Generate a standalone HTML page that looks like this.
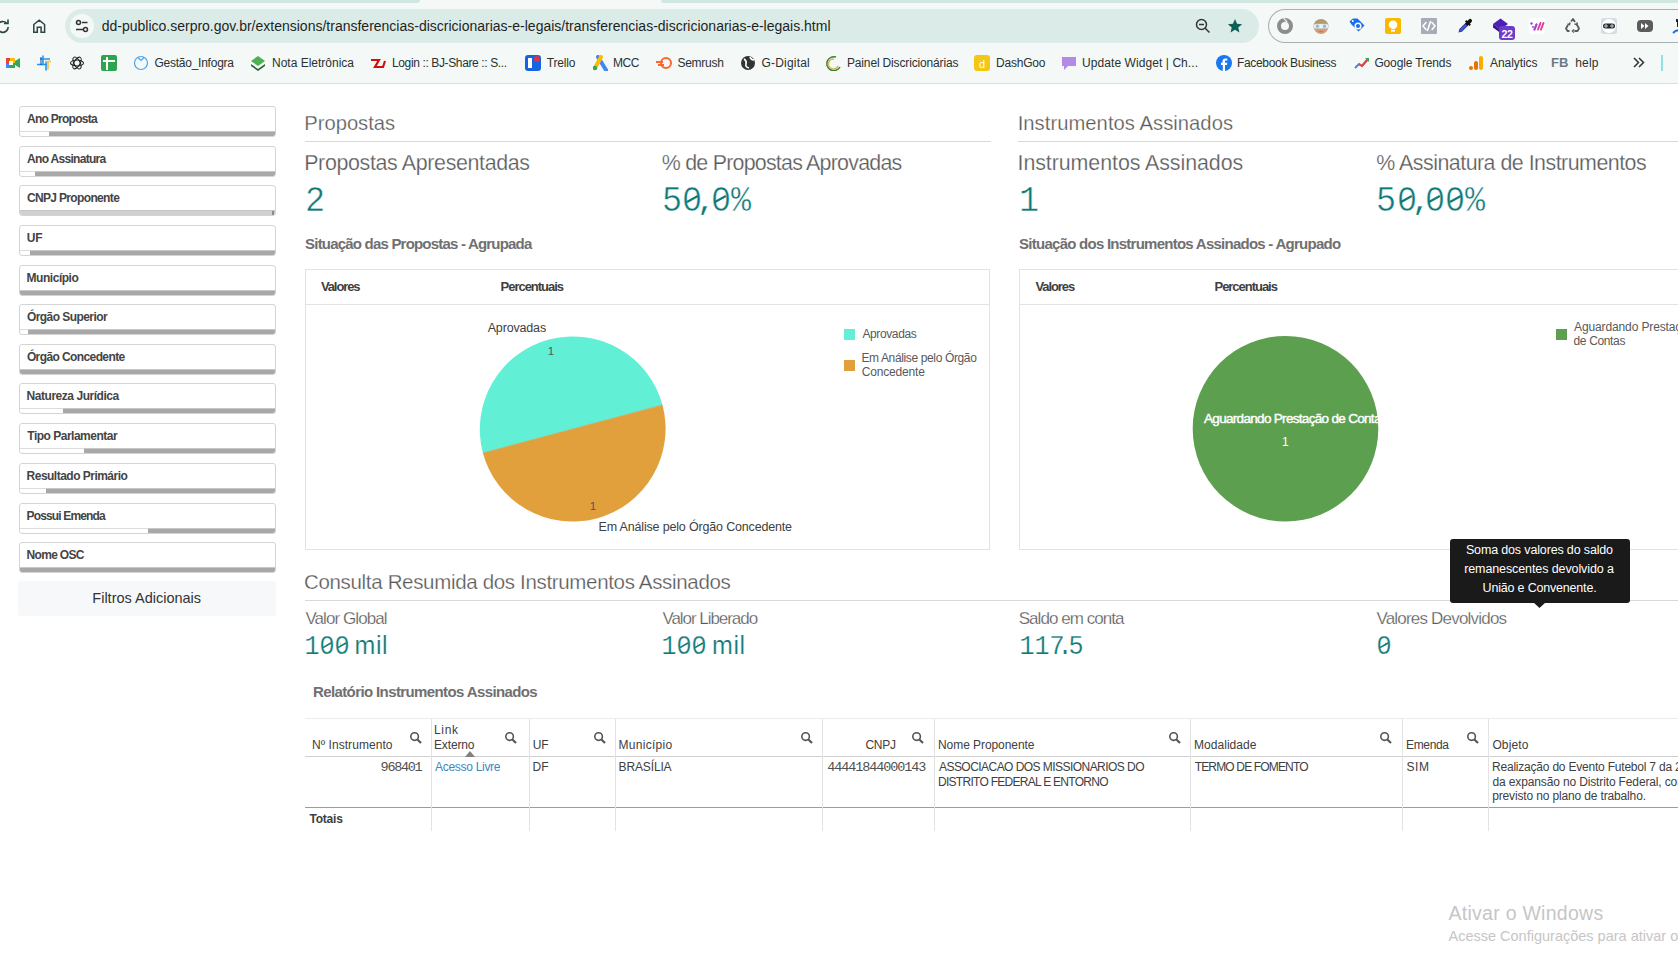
<!DOCTYPE html><html><head><meta charset="utf-8"><style>
html,body{margin:0;padding:0;width:1678px;height:960px;overflow:hidden;background:#fff;}
body{position:relative;font-family:"Liberation Sans",sans-serif;}
.t{position:absolute;white-space:nowrap;line-height:1;}
</style></head><body>
<div style="position:absolute;left:0px;top:0px;width:1678px;height:84px;background:#f4f9f8;"></div>
<div style="position:absolute;left:0px;top:0px;width:420px;height:3px;background:#cfe6e1;border-bottom-right-radius:3px;"></div>
<div style="position:absolute;left:661px;top:0px;width:1017px;height:3px;background:#cfe6e1;border-bottom-left-radius:3px;"></div>
<div style="position:absolute;left:0px;top:83px;width:1678px;height:1px;background:#d9dfde;"></div>
<div style="position:absolute;left:65px;top:9px;width:1194px;height:34px;background:#dbece8;border-radius:17px;"></div>
<div style="position:absolute;left:70px;top:14px;width:24px;height:24px;background:#f4f9f8;border-radius:12px;"></div>
<svg style="position:absolute;left:75px;top:19px" width="14" height="14" viewBox="0 0 14 14" fill="none" stroke="#333" stroke-width="1.5"><circle cx="3.5" cy="3.5" r="2"/><line x1="7" y1="3.5" x2="12.5" y2="3.5"/><circle cx="10.5" cy="10.5" r="2"/><line x1="1" y1="10.5" x2="8" y2="10.5"/></svg>
<div class="t" style="left:101.70px;top:18.75px;font-size:14px;color:#1f1f1f;">dd-publico.serpro.gov.br/extensions/transferencias-discricionarias-e-legais/transferencias-discricionarias-e-legais.html</div>
<svg style="position:absolute;left:-5px;top:19px" width="16" height="16" viewBox="0 0 16 16" fill="none" stroke="#2b4541" stroke-width="1.6"><path d="M13.2 8a5.4 5.4 0 1 1-1.6-3.9"/><path d="M13 0.5v4h-4"/></svg>
<svg style="position:absolute;left:32px;top:18px" width="15" height="16" viewBox="0 0 15 16" fill="none" stroke="#2b4541" stroke-width="1.5" stroke-linejoin="miter"><path d="M1.8 6.5L7.2 2.2L12.6 6.5V14.2H9.1V9.3H5.3V14.2H1.8Z"/></svg>
<svg style="position:absolute;left:1195px;top:18px" width="16" height="16" viewBox="0 0 16 16" fill="none" stroke="#333" stroke-width="1.5"><circle cx="6.5" cy="6.5" r="5"/><line x1="4" y1="6.5" x2="9" y2="6.5"/><line x1="10" y1="10" x2="14.5" y2="14.5"/></svg>
<svg style="position:absolute;left:1227px;top:18px" width="16" height="16" viewBox="0 0 24 24"><path fill="#0b6058" d="M12 1.5l3.1 7.2 7.6.6-5.8 5 1.8 7.5L12 17.8l-6.7 4 1.8-7.5-5.8-5 7.6-.6z"/></svg>
<div style="position:absolute;left:1268px;top:9px;width:440px;height:32px;border:1px solid #a9b0af;border-right:none;border-radius:17px 0 0 17px;"></div>
<svg style="position:absolute;left:1277px;top:18px;overflow:visible" width="16" height="16" viewBox="0 0 16 16"><circle cx="8" cy="8" r="6" fill="none" stroke="#8c8c8c" stroke-width="4"/><path d="M6.5 0.5l3 3-2 1.5" fill="#f4f9f8" stroke="#f4f9f8" stroke-width="1.5"/><path d="M6 1.5l2.5 2.2" stroke="#8c8c8c" stroke-width="1.2"/></svg>
<svg style="position:absolute;left:1313px;top:18px;overflow:visible" width="16" height="16" viewBox="0 0 16 16"><circle cx="8" cy="8.5" r="7.5" fill="#d69c78"/><path d="M0.8 7A7.5 7.5 0 0 1 15.2 7z" fill="#b59a70"/><rect x="0.5" y="6" width="15" height="4.6" rx="2.3" fill="#eef6f8" stroke="#c0c8cc" stroke-width=".5"/><circle cx="4.5" cy="8.3" r="1.8" fill="#8fbfd0"/><circle cx="11.5" cy="8.3" r="1.8" fill="#8fbfd0"/><path d="M5 13l3 1.5 3-1.5" fill="#c07a5a"/></svg>
<svg style="position:absolute;left:1349px;top:18px;overflow:visible" width="16" height="16" viewBox="0 0 16 16"><path d="M0.5 3.5L4 0.5h4.5l7 7-6 6-7-7z" fill="#1a6ee8" transform="rotate(0)"/><circle cx="9" cy="8" r="2.8" fill="none" stroke="#fff" stroke-width="1.5"/><circle cx="3.8" cy="3" r="1" fill="#fff"/></svg>
<svg style="position:absolute;left:1385px;top:18px;overflow:visible" width="16" height="16" viewBox="0 0 16 16"><rect x="0" y="0" width="16" height="16" rx="2" fill="#fbb800"/><circle cx="8" cy="6.8" r="4.3" fill="#fff"/><rect x="6" y="11.8" width="4" height="1.8" fill="#fff"/></svg>
<svg style="position:absolute;left:1421px;top:18px;overflow:visible" width="16" height="16" viewBox="0 0 16 16"><rect x="0" y="0" width="16" height="16" rx="1" fill="#a8abb8"/><path d="M5 4.5L2 8l3 3.5M11 4.5L14 8l-3 3.5M9.5 3.5L6.5 12.5" stroke="#fff" stroke-width="1.6" fill="none" stroke-linecap="round"/></svg>
<svg style="position:absolute;left:1457px;top:18px;overflow:visible" width="16" height="16" viewBox="0 0 16 16"><path d="M14.5 1.5a1.8 1.8 0 0 0-2.6 0l-1.6 1.6-1-1-1.3 1.3 1 1-6.5 6.5-1 3.6 3.6-1 6.5-6.5 1 1 1.3-1.3-1-1 1.6-1.6a1.8 1.8 0 0 0 0-2.6z" fill="#111"/><path d="M2.6 11.2l5.5-5.5 2.2 2.2-5.5 5.5-2.8.6z" fill="#3d55d6"/></svg>
<svg style="position:absolute;left:1493px;top:18px;overflow:visible" width="16" height="16" viewBox="0 0 16 16"><path d="M0 6L7.5 0.5 15 6 7.5 11.5z" fill="#4b1fb8"/><path d="M0 6v3.5l7.5 5.5V11.5z" fill="#3a1590"/><rect x="6" y="8" width="16" height="14" rx="3" fill="#6f3bc8"/><text x="14" y="19.6" font-size="10.5" font-weight="700" text-anchor="middle" fill="#fff" font-family="Liberation Sans" letter-spacing="-0.3">22</text></svg>
<svg style="position:absolute;left:1529px;top:18px;overflow:visible" width="16" height="16" viewBox="0 0 16 16"><rect width="16" height="16" rx="2.5" fill="#fff"/><path d="M5.5 11.5l2-5M9 11.5l2.5-6.5M12 11.5l2.5-6.5" stroke="#e63c9a" stroke-width="2" stroke-linecap="round"/><path d="M5.5 11.5l2-5" stroke="#9b45f0" stroke-width="2" stroke-linecap="round"/><circle cx="2.5" cy="5.5" r="1.2" fill="#7b4cf2"/><circle cx="4" cy="9" r="1" fill="#a04cf2"/></svg>
<svg style="position:absolute;left:1565px;top:18px;overflow:visible" width="16" height="16" viewBox="0 0 16 16"><path d="M6 3.5l2-2.5 2 3M11.5 6l2.5 4.5-1.5 2.5H9.5M4.5 13H2.5L1 10.5l2-3.5" stroke="#5a5a5a" stroke-width="1.8" fill="none" stroke-linejoin="round"/><path d="M9 11.5l-1.5 1.5 1.5 1.5M12.5 4.5l-1 2-2-.5M2.5 6l2 .5.5-2" stroke="#5a5a5a" stroke-width="1.5" fill="none"/></svg>
<svg style="position:absolute;left:1601px;top:18px;overflow:visible" width="16" height="16" viewBox="0 0 16 16"><rect width="16" height="16" rx="2.5" fill="#d5dde3"/><circle cx="8" cy="8" r="7" fill="#fff"/><rect x="2" y="5.5" width="12" height="5" rx="2.5" fill="#1f2a33"/><circle cx="5" cy="8" r="1.2" fill="none" stroke="#fff" stroke-width=".8"/><circle cx="11" cy="8" r="1.2" fill="none" stroke="#fff" stroke-width=".8"/></svg>
<svg style="position:absolute;left:1637px;top:18px;overflow:visible" width="16" height="16" viewBox="0 0 16 16"><rect x="0" y="2" width="16" height="12" rx="4" fill="#5c5c5c"/><path d="M4 5l3.5 3L4 11zM8 5l3.5 3L8 11z" fill="#fff"/></svg>
<svg style="position:absolute;left:1673px;top:18px;overflow:visible" width="16" height="16" viewBox="0 0 16 16"><path d="M3 1h6v3H3z M4 4h4v5H4z" fill="#222"/><path d="M0 15q4-4 8-2" stroke="#1a73e8" stroke-width="2" fill="none"/></svg>
<svg style="position:absolute;left:5px;top:55px" width="16" height="16" viewBox="0 0 16 16"><rect x="1" y="3" width="9" height="10" rx="1" fill="#fbbc04"/><rect x="1" y="8" width="9" height="5" fill="#34a853"/><rect x="1" y="3" width="4" height="6" fill="#ea4335"/><rect x="1" y="9" width="3" height="4" fill="#4285f4"/><path d="M10 6l5-3v10l-5-3z" fill="#34a853"/><rect x="4" y="6" width="4" height="4" fill="#fff"/></svg>
<svg style="position:absolute;left:37px;top:55px" width="16" height="16" viewBox="0 0 16 16"><path d="M6 0.5v10M3 4h10M0 9.5h10M9 6v9.5" stroke="#2196f3" stroke-width="1.6" fill="none"/><path d="M8 6.5h6M11 6.5v8" stroke="#fbc02d" stroke-width="1.6"/><path d="M4 2v8" stroke="#0d47a1" stroke-width="1"/></svg>
<svg style="position:absolute;left:69px;top:55px" width="16" height="16" viewBox="0 0 16 16"><g fill="none" stroke="#222" stroke-width="1.1"><ellipse cx="8" cy="8" rx="6.5" ry="3"/><ellipse cx="8" cy="8" rx="6.5" ry="3" transform="rotate(60 8 8)"/><ellipse cx="8" cy="8" rx="6.5" ry="3" transform="rotate(120 8 8)"/></g></svg>
<svg style="position:absolute;left:101px;top:55px" width="16" height="16" viewBox="0 0 16 16"><rect width="16" height="16" rx="2" fill="#2ea44f"/><path d="M2 6h12M6 2v13" stroke="#fff" stroke-width="2"/></svg>
<svg style="position:absolute;left:133px;top:55px" width="16" height="16" viewBox="0 0 16 16"><circle cx="8" cy="8" r="6.5" fill="none" stroke="#4ba3ef" stroke-width="1.2"/><path d="M5 2.5l3 3 3-3" fill="none" stroke="#4ba3ef" stroke-width="1.2"/></svg>
<svg style="position:absolute;left:250px;top:55px" width="16" height="16" viewBox="0 0 16 16"><path d="M8 1l7 5-7 5-7-5z" fill="#4caf50"/><path d="M1 9l7 5 7-5v2l-7 5-7-5z" fill="#2e5e32"/></svg>
<svg style="position:absolute;left:370px;top:55px" width="16" height="16" viewBox="0 0 16 16"><path d="M1 5h8l-4 7h8l2-6" stroke="#d01010" stroke-width="2.2" fill="none"/></svg>
<svg style="position:absolute;left:525px;top:55px" width="16" height="16" viewBox="0 0 16 16"><rect width="16" height="16" rx="3" fill="#1565e0"/><rect x="3" y="3" width="4" height="10" fill="#fff"/><circle cx="12" cy="4" r="3" fill="#e0304a"/></svg>
<svg style="position:absolute;left:592px;top:55px" width="16" height="16" viewBox="0 0 16 16"><path d="M6 2l8 13" stroke="#4285f4" stroke-width="4" stroke-linecap="round"/><path d="M9 2L3 13" stroke="#fbbc04" stroke-width="4" stroke-linecap="round"/><circle cx="3" cy="13" r="2.2" fill="#34a853"/></svg>
<svg style="position:absolute;left:656px;top:55px" width="16" height="16" viewBox="0 0 16 16"><circle cx="10" cy="8" r="5" fill="none" stroke="#ff642d" stroke-width="2"/><path d="M0 7h7M2 10h6" stroke="#ff642d" stroke-width="2"/></svg>
<svg style="position:absolute;left:740px;top:55px" width="16" height="16" viewBox="0 0 16 16"><circle cx="8" cy="8" r="7" fill="#333"/><path d="M4 4q3 2 2 5t3 4M10 2q1 3 4 3" stroke="#fff" stroke-width="1.6" fill="none"/></svg>
<svg style="position:absolute;left:825px;top:55px" width="16" height="16" viewBox="0 0 16 16"><path d="M11 2a7 7 0 1 0 4 10" stroke="#3b7d3b" stroke-width="1.5" fill="none"/><path d="M9 4a5 5 0 1 0 4 7" stroke="#d4b84a" stroke-width="1.5" fill="none"/></svg>
<svg style="position:absolute;left:974px;top:55px" width="16" height="16" viewBox="0 0 16 16"><rect width="16" height="16" rx="3" fill="#f5c518"/><text x="8" y="13" font-size="11" text-anchor="middle" fill="#fff" font-family="Liberation Sans">d</text></svg>
<svg style="position:absolute;left:1061px;top:55px" width="16" height="16" viewBox="0 0 16 16"><path d="M1 2h14v9H7l-4 4v-4H1z" fill="#b38ae6"/></svg>
<svg style="position:absolute;left:1216px;top:55px" width="16" height="16" viewBox="0 0 16 16"><circle cx="8" cy="8" r="8" fill="#1877f2"/><path d="M9 16V10h2l.3-2.2H9V6.5c0-.6.2-1 1-1h1.3V3.5c-.3 0-1-.1-1.8-.1-1.8 0-3 1.1-3 3.1v1.3H5V10h1.8v6z" fill="#fff"/></svg>
<svg style="position:absolute;left:1354px;top:55px" width="16" height="16" viewBox="0 0 16 16"><path d="M1 13l4-4 3 2 6-7" stroke="#4285f4" stroke-width="2" fill="none"/><path d="M5 9l3 2 6-7" stroke="#ea4335" stroke-width="2" fill="none"/><path d="M11 3h4v4" fill="#34a853"/></svg>
<svg style="position:absolute;left:1468px;top:55px" width="16" height="16" viewBox="0 0 16 16"><rect x="11" y="1" width="4" height="14" rx="2" fill="#f9ab00"/><rect x="6" y="6" width="4" height="9" rx="2" fill="#e37400"/><circle cx="3" cy="13" r="2" fill="#e37400"/></svg>
<div class="t" style="left:154.40px;top:56.64px;font-size:12px;color:#2b3130;letter-spacing:-0.238px;">Gestão_Infogra</div>
<div class="t" style="left:272.00px;top:56.64px;font-size:12px;color:#2b3130;">Nota Eletrônica</div>
<div class="t" style="left:392.00px;top:56.64px;font-size:12px;color:#2b3130;letter-spacing:-0.375px;">Login :: BJ-Share :: S...</div>
<div class="t" style="left:546.70px;top:56.64px;font-size:12px;color:#2b3130;letter-spacing:-0.160px;">Trello</div>
<div class="t" style="left:613.00px;top:56.64px;font-size:12px;color:#2b3130;letter-spacing:-0.450px;">MCC</div>
<div class="t" style="left:677.50px;top:56.64px;font-size:12px;color:#2b3130;letter-spacing:-0.283px;">Semrush</div>
<div class="t" style="left:761.40px;top:56.64px;font-size:12px;color:#2b3130;letter-spacing:0.213px;">G-Digital</div>
<div class="t" style="left:847.00px;top:56.64px;font-size:12px;color:#2b3130;letter-spacing:-0.157px;">Painel Discricionárias</div>
<div class="t" style="left:996.00px;top:56.64px;font-size:12px;color:#2b3130;letter-spacing:-0.200px;">DashGoo</div>
<div class="t" style="left:1082.10px;top:56.64px;font-size:12px;color:#2b3130;letter-spacing:0.070px;">Update Widget | Ch...</div>
<div class="t" style="left:1237.00px;top:56.64px;font-size:12px;color:#2b3130;letter-spacing:-0.331px;">Facebook Business</div>
<div class="t" style="left:1374.40px;top:56.64px;font-size:12px;color:#2b3130;letter-spacing:-0.142px;">Google Trends</div>
<div class="t" style="left:1490.00px;top:56.64px;font-size:12px;color:#2b3130;letter-spacing:-0.075px;">Analytics</div>
<div class="t" style="left:1551.10px;top:55.80px;font-size:13px;color:#6b7a80;font-weight:700;">FB</div>
<div class="t" style="left:1575.20px;top:56.64px;font-size:12px;color:#2b3130;letter-spacing:0.200px;">help</div>
<svg style="position:absolute;left:1632px;top:57px" width="13" height="11" viewBox="0 0 13 11" fill="none" stroke="#333" stroke-width="1.5"><path d="M2 1l4.5 4.5L2 10M7 1l4.5 4.5L7 10"/></svg>
<div style="position:absolute;left:1661px;top:55px;width:2px;height:16px;background:#8fe3df;"></div>
<div style="position:absolute;left:19px;top:106px;width:255px;height:29px;border:1px solid #d4d4d4;border-radius:3px;background:#fff;overflow:hidden;"><div style="position:absolute;left:0;bottom:0;width:255px;height:5px;border-top:1px solid #dcdcdc;box-sizing:border-box;"></div><div style="position:absolute;left:29px;bottom:0;right:0;height:5px;background:#a8a8a8;border-top:1px solid #c8c8c8;box-sizing:border-box;"></div></div>
<div class="t" style="left:27.10px;top:113.14px;font-size:12px;color:#444;font-weight:700;letter-spacing:-0.745px;">Ano Proposta</div>
<div style="position:absolute;left:19px;top:146px;width:255px;height:29px;border:1px solid #d4d4d4;border-radius:3px;background:#fff;overflow:hidden;"><div style="position:absolute;left:0;bottom:0;width:255px;height:5px;border-top:1px solid #dcdcdc;box-sizing:border-box;"></div><div style="position:absolute;left:15px;bottom:0;right:0;height:5px;background:#a8a8a8;border-top:1px solid #c8c8c8;box-sizing:border-box;"></div></div>
<div class="t" style="left:27.10px;top:153.14px;font-size:12px;color:#444;font-weight:700;letter-spacing:-0.700px;">Ano Assinatura</div>
<div style="position:absolute;left:19px;top:185px;width:255px;height:29px;border:1px solid #d4d4d4;border-radius:3px;background:#fff;overflow:hidden;"><div style="position:absolute;left:0;bottom:0;width:255px;height:5px;background:#d0d0d0;border-top:1px solid #c4c4c4;box-sizing:border-box;"></div><div style="position:absolute;right:1px;bottom:0;width:2px;height:4px;background:#8a8a8a;"></div></div>
<div class="t" style="left:26.90px;top:192.14px;font-size:12px;color:#444;font-weight:700;letter-spacing:-0.650px;">CNPJ Proponente</div>
<div style="position:absolute;left:19px;top:225px;width:255px;height:29px;border:1px solid #d4d4d4;border-radius:3px;background:#fff;overflow:hidden;"><div style="position:absolute;left:0;bottom:0;width:255px;height:5px;border-top:1px solid #dcdcdc;box-sizing:border-box;"></div><div style="position:absolute;left:10px;bottom:0;right:0;height:5px;background:#a8a8a8;border-top:1px solid #c8c8c8;box-sizing:border-box;"></div></div>
<div class="t" style="left:26.70px;top:232.14px;font-size:12px;color:#444;font-weight:700;">UF</div>
<div style="position:absolute;left:19px;top:265px;width:255px;height:29px;border:1px solid #d4d4d4;border-radius:3px;background:#fff;overflow:hidden;"><div style="position:absolute;left:0;bottom:0;width:255px;height:5px;border-top:1px solid #dcdcdc;box-sizing:border-box;"></div><div style="position:absolute;left:0px;bottom:0;right:0;height:5px;background:#a8a8a8;border-top:1px solid #c8c8c8;box-sizing:border-box;"></div></div>
<div class="t" style="left:26.60px;top:272.14px;font-size:12px;color:#444;font-weight:700;letter-spacing:-0.475px;">Município</div>
<div style="position:absolute;left:19px;top:304px;width:255px;height:29px;border:1px solid #d4d4d4;border-radius:3px;background:#fff;overflow:hidden;"><div style="position:absolute;left:0;bottom:0;width:255px;height:5px;border-top:1px solid #dcdcdc;box-sizing:border-box;"></div><div style="position:absolute;left:8px;bottom:0;right:0;height:5px;background:#a8a8a8;border-top:1px solid #c8c8c8;box-sizing:border-box;"></div></div>
<div class="t" style="left:26.90px;top:311.14px;font-size:12px;color:#444;font-weight:700;letter-spacing:-0.562px;">Órgão Superior</div>
<div style="position:absolute;left:19px;top:344px;width:255px;height:29px;border:1px solid #d4d4d4;border-radius:3px;background:#fff;overflow:hidden;"><div style="position:absolute;left:0;bottom:0;width:255px;height:5px;border-top:1px solid #dcdcdc;box-sizing:border-box;"></div><div style="position:absolute;left:0px;bottom:0;right:0;height:5px;background:#a8a8a8;border-top:1px solid #c8c8c8;box-sizing:border-box;"></div></div>
<div class="t" style="left:26.90px;top:351.14px;font-size:12px;color:#444;font-weight:700;letter-spacing:-0.600px;">Órgão Concedente</div>
<div style="position:absolute;left:19px;top:383px;width:255px;height:29px;border:1px solid #d4d4d4;border-radius:3px;background:#fff;overflow:hidden;"><div style="position:absolute;left:0;bottom:0;width:255px;height:5px;border-top:1px solid #dcdcdc;box-sizing:border-box;"></div><div style="position:absolute;left:43px;bottom:0;right:0;height:5px;background:#a8a8a8;border-top:1px solid #c8c8c8;box-sizing:border-box;"></div></div>
<div class="t" style="left:26.60px;top:390.14px;font-size:12px;color:#444;font-weight:700;letter-spacing:-0.463px;">Natureza Jurídica</div>
<div style="position:absolute;left:19px;top:423px;width:255px;height:29px;border:1px solid #d4d4d4;border-radius:3px;background:#fff;overflow:hidden;"><div style="position:absolute;left:0;bottom:0;width:255px;height:5px;border-top:1px solid #dcdcdc;box-sizing:border-box;"></div><div style="position:absolute;left:64px;bottom:0;right:0;height:5px;background:#a8a8a8;border-top:1px solid #c8c8c8;box-sizing:border-box;"></div></div>
<div class="t" style="left:27.30px;top:430.14px;font-size:12px;color:#444;font-weight:700;letter-spacing:-0.500px;">Tipo Parlamentar</div>
<div style="position:absolute;left:19px;top:463px;width:255px;height:29px;border:1px solid #d4d4d4;border-radius:3px;background:#fff;overflow:hidden;"><div style="position:absolute;left:0;bottom:0;width:255px;height:5px;border-top:1px solid #dcdcdc;box-sizing:border-box;"></div><div style="position:absolute;left:26px;bottom:0;right:0;height:5px;background:#a8a8a8;border-top:1px solid #c8c8c8;box-sizing:border-box;"></div></div>
<div class="t" style="left:26.60px;top:470.14px;font-size:12px;color:#444;font-weight:700;letter-spacing:-0.518px;">Resultado Primário</div>
<div style="position:absolute;left:19px;top:503px;width:255px;height:29px;border:1px solid #d4d4d4;border-radius:3px;background:#fff;overflow:hidden;"><div style="position:absolute;left:0;bottom:0;width:255px;height:5px;border-top:1px solid #dcdcdc;box-sizing:border-box;"></div><div style="position:absolute;left:128px;bottom:0;right:0;height:5px;background:#a8a8a8;border-top:1px solid #c8c8c8;box-sizing:border-box;"></div></div>
<div class="t" style="left:26.60px;top:510.14px;font-size:12px;color:#444;font-weight:700;letter-spacing:-0.858px;">Possui Emenda</div>
<div style="position:absolute;left:19px;top:542px;width:255px;height:29px;border:1px solid #d4d4d4;border-radius:3px;background:#fff;overflow:hidden;"><div style="position:absolute;left:0;bottom:0;width:255px;height:5px;border-top:1px solid #dcdcdc;box-sizing:border-box;"></div><div style="position:absolute;left:0px;bottom:0;right:0;height:5px;background:#a8a8a8;border-top:1px solid #c8c8c8;box-sizing:border-box;"></div></div>
<div class="t" style="left:26.60px;top:549.14px;font-size:12px;color:#444;font-weight:700;letter-spacing:-0.700px;">Nome OSC</div>
<div style="position:absolute;left:18px;top:581px;width:258px;height:35px;background:#f6f8fa;border-radius:3px;"></div>
<div class="t" style="left:92.30px;top:590.73px;font-size:14.5px;color:#333;">Filtros Adicionais</div>
<div class="t" style="left:304.30px;top:112.70px;font-size:20.2px;color:#595959;letter-spacing:-0.013px;-webkit-text-stroke:0.25px #fff;paint-order:fill stroke;">Propostas</div>
<div style="position:absolute;left:305px;top:141px;width:686px;height:1px;background:#d9d9d9;"></div>
<div class="t" style="left:1017.70px;top:113.10px;font-size:20.2px;color:#595959;letter-spacing:0.048px;-webkit-text-stroke:0.25px #fff;paint-order:fill stroke;">Instrumentos Assinados</div>
<div style="position:absolute;left:1018px;top:141px;width:660px;height:1px;background:#d9d9d9;"></div>
<div class="t" style="left:304.20px;top:153.28px;font-size:21.4px;color:#595959;letter-spacing:-0.343px;-webkit-text-stroke:0.25px #fff;paint-order:fill stroke;">Propostas Apresentadas</div>
<div class="t" style="left:661.80px;top:153.28px;font-size:21.4px;color:#595959;letter-spacing:-0.765px;-webkit-text-stroke:0.25px #fff;paint-order:fill stroke;">% de Propostas Aprovadas</div>
<div class="t" style="left:1017.50px;top:153.28px;font-size:21.4px;color:#595959;letter-spacing:-0.067px;-webkit-text-stroke:0.25px #fff;paint-order:fill stroke;">Instrumentos Assinados</div>
<div class="t" style="left:1376.30px;top:153.28px;font-size:21.4px;color:#595959;letter-spacing:-0.511px;-webkit-text-stroke:0.25px #fff;paint-order:fill stroke;">% Assinatura de Instrumentos</div>
<div class="t" style="left:294.50px;top:183.91px;width:40px;text-align:center;font-size:36px;color:#0e7a78;font-family:'Liberation Mono', monospace;transform:scaleX(0.93);-webkit-text-stroke:0.5px #fff;paint-order:fill stroke;">2</div>
<div class="t" style="left:652.20px;top:183.91px;width:40px;text-align:center;font-size:36px;color:#0e7a78;font-family:'Liberation Mono', monospace;transform:scaleX(0.93);-webkit-text-stroke:0.5px #fff;paint-order:fill stroke;">5</div>
<div class="t" style="left:672.20px;top:183.91px;width:40px;text-align:center;font-size:36px;color:#0e7a78;font-family:'Liberation Mono', monospace;transform:scaleX(0.93);-webkit-text-stroke:0.5px #fff;paint-order:fill stroke;">0</div>
<div class="t" style="left:686.20px;top:183.91px;width:40px;text-align:center;font-size:36px;color:#0e7a78;font-family:'Liberation Mono', monospace;transform:scaleX(0.93);-webkit-text-stroke:0.5px #fff;paint-order:fill stroke;">,</div>
<div class="t" style="left:700.50px;top:183.91px;width:40px;text-align:center;font-size:36px;color:#0e7a78;font-family:'Liberation Mono', monospace;transform:scaleX(0.93);-webkit-text-stroke:0.5px #fff;paint-order:fill stroke;">0</div>
<div class="t" style="left:720.80px;top:183.91px;width:40px;text-align:center;font-size:36px;color:#0e7a78;font-family:'Liberation Mono', monospace;transform:scaleX(0.93);-webkit-text-stroke:0.5px #fff;paint-order:fill stroke;">%</div>
<div class="t" style="left:1008.50px;top:183.91px;width:40px;text-align:center;font-size:36px;color:#0e7a78;font-family:'Liberation Mono', monospace;transform:scaleX(0.93);-webkit-text-stroke:0.5px #fff;paint-order:fill stroke;">1</div>
<div class="t" style="left:1366.20px;top:183.91px;width:40px;text-align:center;font-size:36px;color:#0e7a78;font-family:'Liberation Mono', monospace;transform:scaleX(0.93);-webkit-text-stroke:0.5px #fff;paint-order:fill stroke;">5</div>
<div class="t" style="left:1386.60px;top:183.91px;width:40px;text-align:center;font-size:36px;color:#0e7a78;font-family:'Liberation Mono', monospace;transform:scaleX(0.93);-webkit-text-stroke:0.5px #fff;paint-order:fill stroke;">0</div>
<div class="t" style="left:1400.80px;top:183.91px;width:40px;text-align:center;font-size:36px;color:#0e7a78;font-family:'Liberation Mono', monospace;transform:scaleX(0.93);-webkit-text-stroke:0.5px #fff;paint-order:fill stroke;">,</div>
<div class="t" style="left:1414.70px;top:183.91px;width:40px;text-align:center;font-size:36px;color:#0e7a78;font-family:'Liberation Mono', monospace;transform:scaleX(0.93);-webkit-text-stroke:0.5px #fff;paint-order:fill stroke;">0</div>
<div class="t" style="left:1435.10px;top:183.91px;width:40px;text-align:center;font-size:36px;color:#0e7a78;font-family:'Liberation Mono', monospace;transform:scaleX(0.93);-webkit-text-stroke:0.5px #fff;paint-order:fill stroke;">0</div>
<div class="t" style="left:1455.30px;top:183.91px;width:40px;text-align:center;font-size:36px;color:#0e7a78;font-family:'Liberation Mono', monospace;transform:scaleX(0.93);-webkit-text-stroke:0.5px #fff;paint-order:fill stroke;">%</div>
<div class="t" style="left:305.10px;top:236.10px;font-size:15px;color:#707070;font-weight:700;letter-spacing:-0.800px;">Situação das Propostas - Agrupada</div>
<div class="t" style="left:1019.10px;top:236.10px;font-size:15px;color:#707070;font-weight:700;letter-spacing:-0.747px;">Situação dos Instrumentos Assinados - Agrupado</div>
<div style="position:absolute;left:305px;top:269px;width:683px;height:279px;border:1px solid #e3e3e3;"></div>
<div style="position:absolute;left:306px;top:304px;width:683px;height:1px;background:#e3e3e3;"></div>
<div style="position:absolute;left:1019px;top:269px;width:700px;height:279px;border:1px solid #e3e3e3;"></div>
<div style="position:absolute;left:1020px;top:304px;width:660px;height:1px;background:#e3e3e3;"></div>
<div class="t" style="left:320.90px;top:280.30px;font-size:13px;color:#404040;font-weight:700;letter-spacing:-1.100px;">Valores</div>
<div class="t" style="left:500.60px;top:280.30px;font-size:13px;color:#404040;font-weight:700;letter-spacing:-1.030px;">Percentuais</div>
<div class="t" style="left:1035.50px;top:280.30px;font-size:13px;color:#404040;font-weight:700;letter-spacing:-1.100px;">Valores</div>
<div class="t" style="left:1214.50px;top:280.30px;font-size:13px;color:#404040;font-weight:700;letter-spacing:-1.030px;">Percentuais</div>
<svg style="position:absolute;left:0;top:0" width="1678" height="960"><path d="M572.7,429 L662.53,404.93 A93,93 0 0 0 482.87,453.07 Z" fill="#61efd6"/><path d="M572.7,429 L482.87,453.07 A93,93 0 0 0 662.53,404.93 Z" fill="#e2a03d"/><line x1="662.53" y1="404.93" x2="482.87" y2="453.07" stroke="#c9a560" stroke-width="0.7"/><circle cx="1285.5" cy="428.7" r="92.8" fill="#5c9f4f"/></svg>
<div class="t" style="left:487.70px;top:322.42px;font-size:12.5px;color:#404040;letter-spacing:-0.162px;">Aprovadas</div>
<div class="t" style="left:547.65px;top:345.57px;font-size:11.5px;color:#555;">1</div>
<div class="t" style="left:589.65px;top:500.77px;font-size:11.5px;color:#555;">1</div>
<div class="t" style="left:598.50px;top:521.42px;font-size:12.5px;color:#404040;letter-spacing:-0.168px;">Em Análise pelo Órgão Concedente</div>
<div style="position:absolute;left:844px;top:329px;width:11px;height:11px;background:#61efd6;"></div>
<div style="position:absolute;left:844px;top:360px;width:11px;height:11px;background:#e2a03d;"></div>
<div class="t" style="left:862.40px;top:327.84px;font-size:12px;color:#595959;letter-spacing:-0.375px;">Aprovadas</div>
<div class="t" style="left:861.40px;top:352.24px;font-size:12px;color:#595959;letter-spacing:-0.365px;">Em Análise pelo Órgão</div>
<div class="t" style="left:861.80px;top:366.34px;font-size:12px;color:#595959;letter-spacing:-0.178px;">Concedente</div>
<div style="position:absolute;left:1193px;top:400px;width:185px;height:40px;overflow:hidden;">
<div class="t" style="left:11.00px;top:12.07px;font-size:13.5px;color:#fff;letter-spacing:-0.686px;-webkit-text-stroke:0.4px #fff;">Aguardando Prestação de Contas</div>
</div>
<div class="t" style="left:1282.00px;top:436.34px;font-size:12px;color:#fff;">1</div>
<div style="position:absolute;left:1556px;top:329px;width:11px;height:11px;background:#5c9f4f;"></div>
<div class="t" style="left:1574.00px;top:320.84px;font-size:12px;color:#595959;letter-spacing:-0.121px;">Aguardando Prestação</div>
<div class="t" style="left:1573.50px;top:334.84px;font-size:12px;color:#595959;letter-spacing:-0.350px;">de Contas</div>
<div class="t" style="left:304.00px;top:572.15px;font-size:20.5px;color:#595959;letter-spacing:-0.330px;-webkit-text-stroke:0.25px #fff;paint-order:fill stroke;">Consulta Resumida dos Instrumentos Assinados</div>
<div style="position:absolute;left:305px;top:600px;width:1373px;height:1px;background:#d9d9d9;"></div>
<div class="t" style="left:305.40px;top:609.61px;font-size:17px;color:#595959;letter-spacing:-0.918px;-webkit-text-stroke:0.25px #fff;paint-order:fill stroke;">Valor Global</div>
<div class="t" style="left:662.40px;top:609.61px;font-size:17px;color:#595959;letter-spacing:-1.046px;-webkit-text-stroke:0.25px #fff;paint-order:fill stroke;">Valor Liberado</div>
<div class="t" style="left:1018.70px;top:609.61px;font-size:17px;color:#595959;letter-spacing:-0.954px;-webkit-text-stroke:0.25px #fff;paint-order:fill stroke;">Saldo em conta</div>
<div class="t" style="left:1376.40px;top:609.61px;font-size:17px;color:#595959;letter-spacing:-0.800px;-webkit-text-stroke:0.25px #fff;paint-order:fill stroke;">Valores Devolvidos</div>
<div class="t" style="left:292.30px;top:634.10px;width:40px;text-align:center;font-size:27px;color:#0e7a78;font-family:'Liberation Mono', monospace;transform:scaleX(0.93);-webkit-text-stroke:0.25px #fff;paint-order:fill stroke;">1</div>
<div class="t" style="left:306.90px;top:634.10px;width:40px;text-align:center;font-size:27px;color:#0e7a78;font-family:'Liberation Mono', monospace;transform:scaleX(0.93);-webkit-text-stroke:0.25px #fff;paint-order:fill stroke;">0</div>
<div class="t" style="left:322.30px;top:634.10px;width:40px;text-align:center;font-size:27px;color:#0e7a78;font-family:'Liberation Mono', monospace;transform:scaleX(0.93);-webkit-text-stroke:0.25px #fff;paint-order:fill stroke;">0</div>
<div class="t" style="left:354.60px;top:632.74px;font-size:25px;color:#0e7a78;letter-spacing:0.550px;-webkit-text-stroke:0.2px #fff;paint-order:fill stroke;">mil</div>
<div class="t" style="left:649.30px;top:634.10px;width:40px;text-align:center;font-size:27px;color:#0e7a78;font-family:'Liberation Mono', monospace;transform:scaleX(0.93);-webkit-text-stroke:0.25px #fff;paint-order:fill stroke;">1</div>
<div class="t" style="left:663.90px;top:634.10px;width:40px;text-align:center;font-size:27px;color:#0e7a78;font-family:'Liberation Mono', monospace;transform:scaleX(0.93);-webkit-text-stroke:0.25px #fff;paint-order:fill stroke;">0</div>
<div class="t" style="left:679.30px;top:634.10px;width:40px;text-align:center;font-size:27px;color:#0e7a78;font-family:'Liberation Mono', monospace;transform:scaleX(0.93);-webkit-text-stroke:0.25px #fff;paint-order:fill stroke;">0</div>
<div class="t" style="left:712.10px;top:632.74px;font-size:25px;color:#0e7a78;letter-spacing:0.550px;-webkit-text-stroke:0.2px #fff;paint-order:fill stroke;">mil</div>
<div class="t" style="left:1006.80px;top:634.10px;width:40px;text-align:center;font-size:27px;color:#0e7a78;font-family:'Liberation Mono', monospace;transform:scaleX(0.93);-webkit-text-stroke:0.25px #fff;paint-order:fill stroke;">1</div>
<div class="t" style="left:1021.70px;top:634.10px;width:40px;text-align:center;font-size:27px;color:#0e7a78;font-family:'Liberation Mono', monospace;transform:scaleX(0.93);-webkit-text-stroke:0.25px #fff;paint-order:fill stroke;">1</div>
<div class="t" style="left:1036.60px;top:634.10px;width:40px;text-align:center;font-size:27px;color:#0e7a78;font-family:'Liberation Mono', monospace;transform:scaleX(0.93);-webkit-text-stroke:0.25px #fff;paint-order:fill stroke;">7</div>
<div class="t" style="left:1044.50px;top:634.10px;width:40px;text-align:center;font-size:27px;color:#0e7a78;font-family:'Liberation Mono', monospace;transform:scaleX(0.93);-webkit-text-stroke:0.25px #fff;paint-order:fill stroke;">.</div>
<div class="t" style="left:1055.60px;top:634.10px;width:40px;text-align:center;font-size:27px;color:#0e7a78;font-family:'Liberation Mono', monospace;transform:scaleX(0.93);-webkit-text-stroke:0.25px #fff;paint-order:fill stroke;">5</div>
<div class="t" style="left:1363.50px;top:634.10px;width:40px;text-align:center;font-size:27px;color:#0e7a78;font-family:'Liberation Mono', monospace;transform:scaleX(0.93);-webkit-text-stroke:0.25px #fff;paint-order:fill stroke;">0</div>
<div style="position:absolute;left:689.77px;top:194.60px;width:4.86px;height:7.80px;background:#fff"></div>
<svg style="position:absolute;left:684.80px;top:193.80px" width="14.80" height="10.00"><line x1="2" y1="8.00" x2="12.80" y2="2" stroke="#0e7a78" stroke-width="2.1" stroke-linecap="butt"/></svg>
<div style="position:absolute;left:718.07px;top:194.60px;width:4.86px;height:7.80px;background:#fff"></div>
<svg style="position:absolute;left:713.10px;top:193.80px" width="14.80" height="10.00"><line x1="2" y1="8.00" x2="12.80" y2="2" stroke="#0e7a78" stroke-width="2.1" stroke-linecap="butt"/></svg>
<div style="position:absolute;left:1404.17px;top:194.60px;width:4.86px;height:7.80px;background:#fff"></div>
<svg style="position:absolute;left:1399.20px;top:193.80px" width="14.80" height="10.00"><line x1="2" y1="8.00" x2="12.80" y2="2" stroke="#0e7a78" stroke-width="2.1" stroke-linecap="butt"/></svg>
<div style="position:absolute;left:1432.27px;top:194.60px;width:4.86px;height:7.80px;background:#fff"></div>
<svg style="position:absolute;left:1427.30px;top:193.80px" width="14.80" height="10.00"><line x1="2" y1="8.00" x2="12.80" y2="2" stroke="#0e7a78" stroke-width="2.1" stroke-linecap="butt"/></svg>
<div style="position:absolute;left:1452.67px;top:194.60px;width:4.86px;height:7.80px;background:#fff"></div>
<svg style="position:absolute;left:1447.70px;top:193.80px" width="14.80" height="10.00"><line x1="2" y1="8.00" x2="12.80" y2="2" stroke="#0e7a78" stroke-width="2.1" stroke-linecap="butt"/></svg>
<div style="position:absolute;left:698.2px;top:215px;width:10px;height:4px;background:#fff;"></div>
<div style="position:absolute;left:1412.8px;top:215px;width:10px;height:4px;background:#fff;"></div>
<div style="position:absolute;left:325.10px;top:641.78px;width:3.60px;height:5.98px;background:#fff"></div>
<svg style="position:absolute;left:320.90px;top:640.70px" width="12.00" height="8.60"><line x1="2" y1="6.60" x2="10.00" y2="2" stroke="#0e7a78" stroke-width="1.6" stroke-linecap="butt"/></svg>
<div style="position:absolute;left:340.50px;top:641.78px;width:3.60px;height:5.98px;background:#fff"></div>
<svg style="position:absolute;left:336.30px;top:640.70px" width="12.00" height="8.60"><line x1="2" y1="6.60" x2="10.00" y2="2" stroke="#0e7a78" stroke-width="1.6" stroke-linecap="butt"/></svg>
<div style="position:absolute;left:682.40px;top:641.78px;width:3.60px;height:5.98px;background:#fff"></div>
<svg style="position:absolute;left:678.20px;top:640.70px" width="12.00" height="8.60"><line x1="2" y1="6.60" x2="10.00" y2="2" stroke="#0e7a78" stroke-width="1.6" stroke-linecap="butt"/></svg>
<div style="position:absolute;left:697.60px;top:641.78px;width:3.60px;height:5.98px;background:#fff"></div>
<svg style="position:absolute;left:693.40px;top:640.70px" width="12.00" height="8.60"><line x1="2" y1="6.60" x2="10.00" y2="2" stroke="#0e7a78" stroke-width="1.6" stroke-linecap="butt"/></svg>
<div style="position:absolute;left:1381.70px;top:641.78px;width:3.60px;height:5.98px;background:#fff"></div>
<svg style="position:absolute;left:1377.50px;top:640.70px" width="12.00" height="8.60"><line x1="2" y1="6.60" x2="10.00" y2="2" stroke="#0e7a78" stroke-width="1.6" stroke-linecap="butt"/></svg>
<div class="t" style="left:313.00px;top:684.20px;font-size:15px;color:#707070;font-weight:700;letter-spacing:-0.613px;">Relatório Instrumentos Assinados</div>
<div style="position:absolute;left:305px;top:718px;width:1373px;height:1px;background:#ececec;"></div>
<div style="position:absolute;left:305px;top:756px;width:1373px;height:1px;background:#cfcfcf;"></div>
<div style="position:absolute;left:305px;top:807px;width:1373px;height:1px;background:#9c9c9c;"></div>
<div style="position:absolute;left:431px;top:719px;width:1px;height:112px;background:#e3e3e3;"></div>
<div style="position:absolute;left:529px;top:719px;width:1px;height:112px;background:#e3e3e3;"></div>
<div style="position:absolute;left:615px;top:719px;width:1px;height:112px;background:#e3e3e3;"></div>
<div style="position:absolute;left:822px;top:719px;width:1px;height:112px;background:#e3e3e3;"></div>
<div style="position:absolute;left:934px;top:719px;width:1px;height:112px;background:#e3e3e3;"></div>
<div style="position:absolute;left:1190px;top:719px;width:1px;height:112px;background:#e3e3e3;"></div>
<div style="position:absolute;left:1402px;top:719px;width:1px;height:112px;background:#e3e3e3;"></div>
<div style="position:absolute;left:1488px;top:719px;width:1px;height:112px;background:#e3e3e3;"></div>
<svg style="position:absolute;left:410px;top:732px" width="12" height="12" viewBox="0 0 12 12" fill="none" stroke="#555" stroke-width="1.6"><circle cx="4.6" cy="4.6" r="3.8"/><line x1="7.4" y1="7.4" x2="11" y2="11" stroke-width="2.1"/></svg>
<svg style="position:absolute;left:505px;top:732px" width="12" height="12" viewBox="0 0 12 12" fill="none" stroke="#555" stroke-width="1.6"><circle cx="4.6" cy="4.6" r="3.8"/><line x1="7.4" y1="7.4" x2="11" y2="11" stroke-width="2.1"/></svg>
<svg style="position:absolute;left:594px;top:732px" width="12" height="12" viewBox="0 0 12 12" fill="none" stroke="#555" stroke-width="1.6"><circle cx="4.6" cy="4.6" r="3.8"/><line x1="7.4" y1="7.4" x2="11" y2="11" stroke-width="2.1"/></svg>
<svg style="position:absolute;left:801px;top:732px" width="12" height="12" viewBox="0 0 12 12" fill="none" stroke="#555" stroke-width="1.6"><circle cx="4.6" cy="4.6" r="3.8"/><line x1="7.4" y1="7.4" x2="11" y2="11" stroke-width="2.1"/></svg>
<svg style="position:absolute;left:912px;top:732px" width="12" height="12" viewBox="0 0 12 12" fill="none" stroke="#555" stroke-width="1.6"><circle cx="4.6" cy="4.6" r="3.8"/><line x1="7.4" y1="7.4" x2="11" y2="11" stroke-width="2.1"/></svg>
<svg style="position:absolute;left:1169px;top:732px" width="12" height="12" viewBox="0 0 12 12" fill="none" stroke="#555" stroke-width="1.6"><circle cx="4.6" cy="4.6" r="3.8"/><line x1="7.4" y1="7.4" x2="11" y2="11" stroke-width="2.1"/></svg>
<svg style="position:absolute;left:1380px;top:732px" width="12" height="12" viewBox="0 0 12 12" fill="none" stroke="#555" stroke-width="1.6"><circle cx="4.6" cy="4.6" r="3.8"/><line x1="7.4" y1="7.4" x2="11" y2="11" stroke-width="2.1"/></svg>
<svg style="position:absolute;left:1467px;top:732px" width="12" height="12" viewBox="0 0 12 12" fill="none" stroke="#555" stroke-width="1.6"><circle cx="4.6" cy="4.6" r="3.8"/><line x1="7.4" y1="7.4" x2="11" y2="11" stroke-width="2.1"/></svg>
<div class="t" style="left:312.00px;top:738.84px;font-size:12px;color:#404040;letter-spacing:0.054px;">Nº Instrumento</div>
<div class="t" style="left:434.00px;top:723.84px;font-size:12px;color:#404040;letter-spacing:0.667px;">Link</div>
<div class="t" style="left:434.00px;top:738.84px;font-size:12px;color:#404040;letter-spacing:-0.150px;">Externo</div>
<div class="t" style="left:532.70px;top:738.84px;font-size:12px;color:#404040;">UF</div>
<div class="t" style="left:618.60px;top:738.84px;font-size:12px;color:#404040;letter-spacing:0.263px;">Município</div>
<div class="t" style="left:865.40px;top:738.84px;font-size:12px;color:#404040;letter-spacing:-0.267px;">CNPJ</div>
<div class="t" style="left:938.00px;top:738.84px;font-size:12px;color:#404040;letter-spacing:-0.064px;">Nome Proponente</div>
<div class="t" style="left:1194.00px;top:738.84px;font-size:12px;color:#404040;letter-spacing:0.044px;">Modalidade</div>
<div class="t" style="left:1406.00px;top:738.84px;font-size:12px;color:#404040;letter-spacing:-0.340px;">Emenda</div>
<div class="t" style="left:1492.40px;top:738.84px;font-size:12px;color:#404040;letter-spacing:0.140px;">Objeto</div>
<svg style="position:absolute;left:465px;top:751px" width="10" height="6" viewBox="0 0 10 6"><path d="M0 6L5 0L10 6Z" fill="#808080"/></svg>
<div class="t" style="left:380.60px;top:760.95px;font-size:13.5px;color:#505050;font-family:'Liberation Mono', monospace;letter-spacing:-1.320px;">968401</div>
<div class="t" style="left:435.00px;top:760.84px;font-size:12px;color:#3a87c2;letter-spacing:-0.291px;">Acesso Livre</div>
<div class="t" style="left:532.60px;top:760.84px;font-size:12px;color:#404040;">DF</div>
<div class="t" style="left:618.60px;top:760.84px;font-size:12px;color:#404040;letter-spacing:-0.143px;">BRASÍLIA</div>
<div class="t" style="left:827.30px;top:760.95px;font-size:13.5px;color:#505050;font-family:'Liberation Mono', monospace;letter-spacing:-1.108px;">44441844000143</div>
<div class="t" style="left:939.00px;top:760.84px;font-size:12px;color:#404040;letter-spacing:-0.548px;">ASSOCIACAO DOS MISSIONARIOS DO</div>
<div class="t" style="left:938.00px;top:775.84px;font-size:12px;color:#404040;letter-spacing:-0.716px;">DISTRITO FEDERAL E ENTORNO</div>
<div class="t" style="left:1194.70px;top:760.84px;font-size:12px;color:#404040;letter-spacing:-0.840px;">TERMO DE FOMENTO</div>
<div class="t" style="left:1406.50px;top:760.84px;font-size:12px;color:#404040;letter-spacing:0.600px;">SIM</div>
<div class="t" style="left:1492.00px;top:760.84px;font-size:12px;color:#404040;letter-spacing:-0.209px;">Realização do Evento Futebol 7 da 2ª</div>
<div class="t" style="left:1492.50px;top:775.84px;font-size:12px;color:#404040;letter-spacing:-0.137px;">da expansão no Distrito Federal, con</div>
<div class="t" style="left:1492.20px;top:789.84px;font-size:12px;color:#404040;letter-spacing:-0.148px;">previsto no plano de trabalho.</div>
<div class="t" style="left:309.40px;top:812.84px;font-size:12px;color:#404040;font-weight:700;letter-spacing:-0.180px;">Totais</div>
<div style="position:absolute;left:1450px;top:539px;width:180px;height:64px;background:#1a1a1a;border-radius:3px;"></div>
<svg style="position:absolute;left:1533px;top:602px" width="13" height="6" viewBox="0 0 13 6"><path d="M0 0L6.5 6L13 0Z" fill="#1a1a1a"/></svg>
<div class="t" style="left:1465.90px;top:544.42px;font-size:12.5px;color:#fff;letter-spacing:-0.150px;">Soma dos valores do saldo</div>
<div class="t" style="left:1464.20px;top:563.42px;font-size:12.5px;color:#fff;letter-spacing:-0.100px;">remanescentes devolvido a</div>
<div class="t" style="left:1482.60px;top:582.42px;font-size:12.5px;color:#fff;letter-spacing:-0.189px;">União e Convenente.</div>
<div class="t" style="left:1448.50px;top:903.99px;font-size:19.5px;color:#c6c6c6;letter-spacing:0.267px;">Ativar o Windows</div>
<div class="t" style="left:1448.50px;top:928.73px;font-size:14.5px;color:#c6c6c6;">Acesse Configurações para ativar o Windows.</div>
</body></html>
